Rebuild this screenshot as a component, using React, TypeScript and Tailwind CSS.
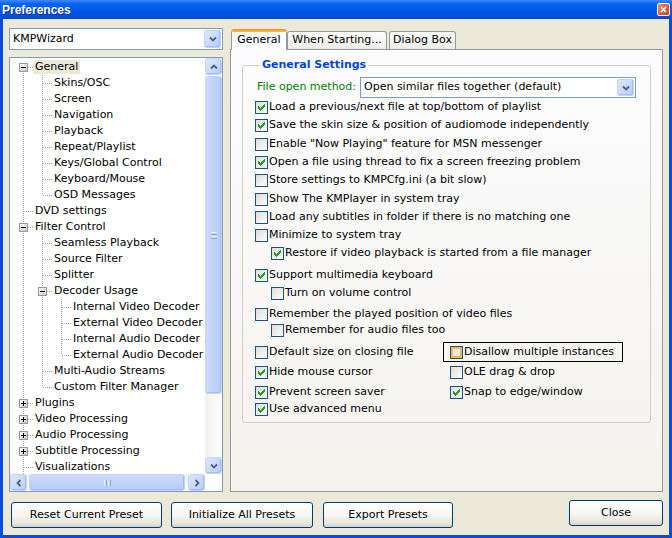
import React from 'react';

type TreeItem = { label: string; level: number; exp?: 'minus' | 'plus'; selected?: boolean };

const treeItems: TreeItem[] = [
  { label: 'General', level: 0, exp: 'minus', selected: true },
  { label: 'Skins/OSC', level: 1 },
  { label: 'Screen', level: 1 },
  { label: 'Navigation', level: 1 },
  { label: 'Playback', level: 1 },
  { label: 'Repeat/Playlist', level: 1 },
  { label: 'Keys/Global Control', level: 1 },
  { label: 'Keyboard/Mouse', level: 1 },
  { label: 'OSD Messages', level: 1 },
  { label: 'DVD settings', level: 0 },
  { label: 'Filter Control', level: 0, exp: 'minus' },
  { label: 'Seamless Playback', level: 1 },
  { label: 'Source Filter', level: 1 },
  { label: 'Splitter', level: 1 },
  { label: 'Decoder Usage', level: 1, exp: 'minus' },
  { label: 'Internal Video Decoder', level: 2 },
  { label: 'External Video Decoder', level: 2 },
  { label: 'Internal Audio Decoder', level: 2 },
  { label: 'External Audio Decoder', level: 2 },
  { label: 'Multi-Audio Streams', level: 1 },
  { label: 'Custom Filter Manager', level: 1 },
  { label: 'Plugins', level: 0, exp: 'plus' },
  { label: 'Video Processing', level: 0, exp: 'plus' },
  { label: 'Audio Processing', level: 0, exp: 'plus' },
  { label: 'Subtitle Processing', level: 0, exp: 'plus' },
  { label: 'Visualizations', level: 0 },
];

// does the branch at level k continue below row i (more siblings further down)
const continues = (i: number, k: number) => {
  for (let j = i + 1; j < treeItems.length; j++) {
    if (treeItems[j].level < k) return false;
    if (treeItems[j].level === k) return true;
  }
  return k === 0; // list is scrolled, root keeps going
};

type Row = { text: string; checked: boolean; indent?: boolean; mt: string; right?: { text: string; checked: boolean; focus?: boolean } };

const rows: Row[] = [
  { text: 'Load a previous/next file at top/bottom of playlist', checked: true, mt: 'mt-[1px]' },
  { text: 'Save the skin size & position of audiomode independently', checked: true, mt: 'mt-[2px]' },
  { text: 'Enable "Now Playing" feature for MSN messenger', checked: false, mt: 'mt-[3px]' },
  { text: 'Open a file using thread to fix a screen freezing problem', checked: true, mt: 'mt-[2px]' },
  { text: 'Store settings to KMPCfg.ini (a bit slow)', checked: false, mt: 'mt-[2px]' },
  { text: 'Show The KMPlayer in system tray', checked: false, mt: 'mt-[3px]' },
  { text: 'Load any subtitles in folder if there is no matching one', checked: false, mt: 'mt-[2px]' },
  { text: 'Minimize to system tray', checked: false, mt: 'mt-[2px]' },
  { text: 'Restore if video playback is started from a file manager', checked: true, indent: true, mt: 'mt-[2px]' },
  { text: 'Support multimedia keyboard', checked: true, mt: 'mt-[6px]' },
  { text: 'Turn on volume control', checked: false, indent: true, mt: 'mt-[2px]' },
  { text: 'Remember the played position of video files', checked: false, mt: 'mt-[5px]' },
  { text: 'Remember for audio files too', checked: false, indent: true, mt: 'mt-0' },
  { text: 'Default size on closing file', checked: false, mt: 'mt-[6px]', right: { text: 'Disallow multiple instances', checked: false, focus: true } },
  { text: 'Hide mouse cursor', checked: true, mt: 'mt-[4px]', right: { text: 'OLE drag & drop', checked: false } },
  { text: 'Prevent screen saver', checked: true, mt: 'mt-[4px]', right: { text: 'Snap to edge/window', checked: true } },
  { text: 'Use advanced menu', checked: true, mt: 'mt-[1px]' },
];

const CheckBox = ({ checked, hover }: { checked: boolean; hover?: boolean }) => (
  <span className="relative flex h-[13px] w-[13px] shrink-0 items-center justify-center border border-[#1C5180] bg-gradient-to-br from-[#DCDCD7] to-white">
    {hover && <span className="absolute inset-0 border-2 border-[#F6B848]" />}
    {checked && (
      <svg width="7" height="7" viewBox="0 0 7 7" shapeRendering="crispEdges" fill="#21A121">
        <rect x="6" y="0" width="1" height="1" />
        <rect x="5" y="1" width="2" height="1" />
        <rect x="0" y="2" width="1" height="1" />
        <rect x="4" y="2" width="3" height="1" />
        <rect x="0" y="3" width="2" height="1" />
        <rect x="3" y="3" width="3" height="1" />
        <rect x="0" y="4" width="5" height="1" />
        <rect x="1" y="5" width="3" height="1" />
        <rect x="2" y="6" width="1" height="1" />
      </svg>
    )}
  </span>
);

const Arrow = ({ dir }: { dir: 'up' | 'down' | 'left' | 'right' }) => {
  const d = {
    up: 'M1 5.5 L4 2.5 L7 5.5',
    down: 'M1 2.5 L4 5.5 L7 2.5',
    left: 'M5.5 1 L2.5 4 L5.5 7',
    right: 'M2.5 1 L5.5 4 L2.5 7',
  }[dir];
  return (
    <svg width="8" height="8" viewBox="0 0 8 8">
      <path d={d} stroke="#4D6185" strokeWidth="1.8" fill="none" />
    </svg>
  );
};

const ScrollBtn = ({ dir }: { dir: 'up' | 'down' | 'left' | 'right' }) => (
  <div className="flex h-[17px] w-[17px] shrink-0 items-center justify-center rounded-[3px] border border-[#C3D3FD] bg-gradient-to-br from-[#DDE7FE] to-[#B9CDF9] shadow-[inset_-1px_-1px_0_#A5BDF2]">
    <Arrow dir={dir} />
  </div>
);

const DropBtn = () => (
  <div className="flex h-full w-[17px] items-center justify-center rounded-[2px] border border-[#C3D3FD] bg-gradient-to-br from-[#DDE7FE] to-[#B9CDF9] shadow-[inset_-1px_-1px_0_#A5BDF2]">
    <Arrow dir="down" />
  </div>
);

const TreeRow = ({ item, i }: { item: TreeItem; i: number }) => {
  const hasNext = continues(i, item.level);
  return (
    <div className="flex h-[16px] shrink-0 items-center pl-[4px]">
      {Array.from({ length: item.level }).map((_, k) => (
        <svg key={k} width="19" height="16" className="shrink-0" shapeRendering="crispEdges">
          {continues(i, k) && <line x1="9.5" y1="0" x2="9.5" y2="16" stroke="#A0A0A0" strokeDasharray="1 1" />}
        </svg>
      ))}
      <svg width="19" height="16" className="shrink-0" shapeRendering="crispEdges">
        <defs>
          <linearGradient id="expfill" x1="0" y1="0" x2="1" y2="1">
            <stop offset="0" stopColor="#FFFFFF" />
            <stop offset="1" stopColor="#C9C4B5" />
          </linearGradient>
        </defs>
        {i > 0 && <line x1="9.5" y1="0" x2="9.5" y2="8" stroke="#A0A0A0" strokeDasharray="1 1" />}
        {hasNext && <line x1="9.5" y1="8" x2="9.5" y2="16" stroke="#A0A0A0" strokeDasharray="1 1" />}
        <line x1="10" y1="8.5" x2="19" y2="8.5" stroke="#A0A0A0" strokeDasharray="1 1" />
        {item.exp && (
          <>
            <rect x="5.5" y="4.5" width="8" height="8" fill="url(#expfill)" stroke="#919B9C" />
            <line x1="7" y1="8.5" x2="12" y2="8.5" stroke="#000" />
            {item.exp === 'plus' && <line x1="9.5" y1="6" x2="9.5" y2="11" stroke="#000" />}
          </>
        )}
      </svg>
      <span className={`whitespace-nowrap px-[2px] leading-[14px] ${item.selected ? 'bg-[#ECE9D8]' : ''}`}>{item.label}</span>
    </div>
  );
};

const XpButton = ({ label, className }: { label: string; className: string }) => (
  <button className={`flex h-[26px] items-center justify-center rounded-[3px] border border-[#003C74] bg-[linear-gradient(180deg,#FFFFFF_0%,#F5F5F1_55%,#E6E3D9_88%,#D6D0C5_100%)] text-[11px] text-black ${className}`}>
    {label}
  </button>
);

export default function App() {
  return (
    <div className="flex h-[538px] w-[672px] flex-col overflow-hidden bg-[#0A4DDD] font-['DejaVu_Sans',sans-serif] text-[11px] text-black">
      {/* title bar */}
      <div className="flex h-[19px] shrink-0 items-center justify-between bg-[linear-gradient(180deg,#3D8AF7_0%,#0A62EE_20%,#0057E6_55%,#0050DD_85%,#0046CF_100%)] pl-[2px] pr-[2px]">
        <span className="pt-px font-['Liberation_Sans',sans-serif] text-[12px] font-bold text-white [text-shadow:1px_1px_0_#0A2A8A]">Preferences</span>
        <div className="flex h-[13px] w-[13px] items-center justify-center rounded-[2px] border border-white bg-gradient-to-br from-[#E98A6F] to-[#C8391A]">
          <svg width="7" height="7" viewBox="0 0 7 7">
            <path d="M1 1 L6 6 M6 1 L1 6" stroke="white" strokeWidth="1.7" />
          </svg>
        </div>
      </div>

      {/* body */}
      <div className="mx-[3px] mb-[3px] flex flex-1 flex-col bg-[#ECE9D8] px-[6px] pt-[9px]">
        <div className="flex h-[464px] gap-[7px]">
          {/* left column */}
          <div className="flex w-[214px] flex-col">
            <div className="flex h-[22px] items-stretch border border-[#7F9DB9] bg-white p-px">
              <span className="flex flex-1 items-center pl-[2px]">KMPWizard</span>
              <DropBtn />
            </div>
            <div className="mt-[7px] flex flex-1 flex-col overflow-hidden border border-[#7F9DB9] bg-white">
              <div className="flex min-h-0 flex-1">
                <div className="flex min-w-0 flex-1 flex-col overflow-hidden pt-px">
                  {treeItems.map((it, i) => (
                    <TreeRow key={it.label} item={it} i={i} />
                  ))}
                </div>
                {/* vertical scrollbar */}
                <div className="flex w-[17px] flex-col bg-gradient-to-r from-[#F3F1EC] to-[#FEFEFB]">
                  <ScrollBtn dir="up" />
                  <div className="mt-[1px] flex h-[318px] items-center justify-center rounded-[3px] border border-[#C3D3FD] bg-gradient-to-r from-[#CCDAFC] to-[#B7CBF8] shadow-[inset_-1px_-1px_0_#A5BDF2]">
                    <div className="flex flex-col gap-px">
                      <div className="h-px w-[6px] bg-[#EEF4FE]" />
                      <div className="h-px w-[6px] bg-[#8CAAE6]" />
                      <div className="h-px w-[6px] bg-[#EEF4FE]" />
                      <div className="h-px w-[6px] bg-[#8CAAE6]" />
                    </div>
                  </div>
                  <div className="flex-1" />
                  <ScrollBtn dir="down" />
                </div>
              </div>
              {/* horizontal scrollbar */}
              <div className="flex h-[17px] shrink-0">
                <div className="flex flex-1 bg-gradient-to-b from-[#F3F1EC] to-[#FEFEFB]">
                  <ScrollBtn dir="left" />
                  <div className="ml-[2px] flex w-[156px] items-center justify-center rounded-[3px] border border-[#C3D3FD] bg-gradient-to-b from-[#CCDAFC] to-[#B7CBF8] shadow-[inset_-1px_-1px_0_#A5BDF2]">
                    <div className="flex gap-px">
                      <div className="h-[6px] w-px bg-[#EEF4FE]" />
                      <div className="h-[6px] w-px bg-[#8CAAE6]" />
                      <div className="h-[6px] w-px bg-[#EEF4FE]" />
                      <div className="h-[6px] w-px bg-[#8CAAE6]" />
                    </div>
                  </div>
                  <div className="flex-1" />
                  <ScrollBtn dir="right" />
                </div>
                <div className="w-[17px] bg-white" />
              </div>
            </div>
          </div>

          {/* right column */}
          <div className="flex flex-1 flex-col">
            <div className="flex h-[21px] items-end pl-px">
              <div className="relative z-10 -mb-px flex h-[21px] w-[56px] flex-col">
                <div className="h-[3px] rounded-t-[3px] bg-gradient-to-b from-[#E68B2C] to-[#FFC73C]" />
                <div className="flex flex-1 items-center justify-center border-x border-[#919B9C] bg-[#FCFCFE] pb-[2px]">General</div>
              </div>
              <div className="flex h-[18px] w-[100px] items-center justify-center rounded-t-[3px] border border-b-0 border-[#919B9C] bg-gradient-to-b from-white to-[#ECEBE6]">
                When Starting...
              </div>
              <div className="ml-[2px] flex h-[18px] w-[67px] items-center justify-center rounded-t-[3px] border border-b-0 border-[#919B9C] bg-gradient-to-b from-white to-[#ECEBE6]">
                Dialog Box
              </div>
            </div>
            <div className="flex flex-1 flex-col border border-[#919B9C] bg-gradient-to-b from-[#FCFCFE] to-[#F4F3EE] px-[11px]">
              <fieldset className="mt-[7px] rounded-[3px] border border-[#D0D0BF] pb-[5px] pl-[12px]">
                <legend className="ml-[5px] px-[2px] text-[11px] font-bold leading-[16px] text-[#0046D5]">General Settings</legend>
                <div className="mt-[4px] flex h-[21px] items-center pl-[2px]">
                  <span className="w-[103px] text-[#008000]">File open method:</span>
                  <div className="flex h-[21px] w-[276px] items-stretch border border-[#7F9DB9] bg-white p-px">
                    <span className="flex flex-1 items-center pl-[2px]">Open similar files together (default)</span>
                    <DropBtn />
                  </div>
                </div>
                {rows.map((r) => (
                  <div key={r.text} className={`flex h-[16px] items-center ${r.mt}`}>
                    <div className={`flex items-center ${r.right ? 'w-[195px]' : ''} ${r.indent ? 'pl-[16px]' : ''}`}>
                      <CheckBox checked={r.checked} />
                      <span className="ml-[1px] whitespace-nowrap">{r.text}</span>
                    </div>
                    {r.right &&
                      (r.right.focus ? (
                        <div className="-ml-[7px] flex h-[20px] items-center border border-black pl-[6px] pr-[8px]">
                          <CheckBox checked={r.right.checked} hover />
                          <span className="ml-[1px] whitespace-nowrap">{r.right.text}</span>
                        </div>
                      ) : (
                        <div className="flex items-center">
                          <CheckBox checked={r.right.checked} />
                          <span className="ml-[1px] whitespace-nowrap">{r.right.text}</span>
                        </div>
                      ))}
                  </div>
                ))}
              </fieldset>
            </div>
          </div>
        </div>

        {/* bottom buttons */}
        <div className="mt-[10px] flex items-start">
          <XpButton label="Reset Current Preset" className="ml-[2px] w-[151px]" />
          <XpButton label="Initialize All Presets" className="ml-[9px] w-[142px]" />
          <XpButton label="Export Presets" className="ml-[10px] w-[130px]" />
          <XpButton label="Close" className="-mt-[2px] ml-auto w-[94px]" />
        </div>
      </div>
    </div>
  );
}
